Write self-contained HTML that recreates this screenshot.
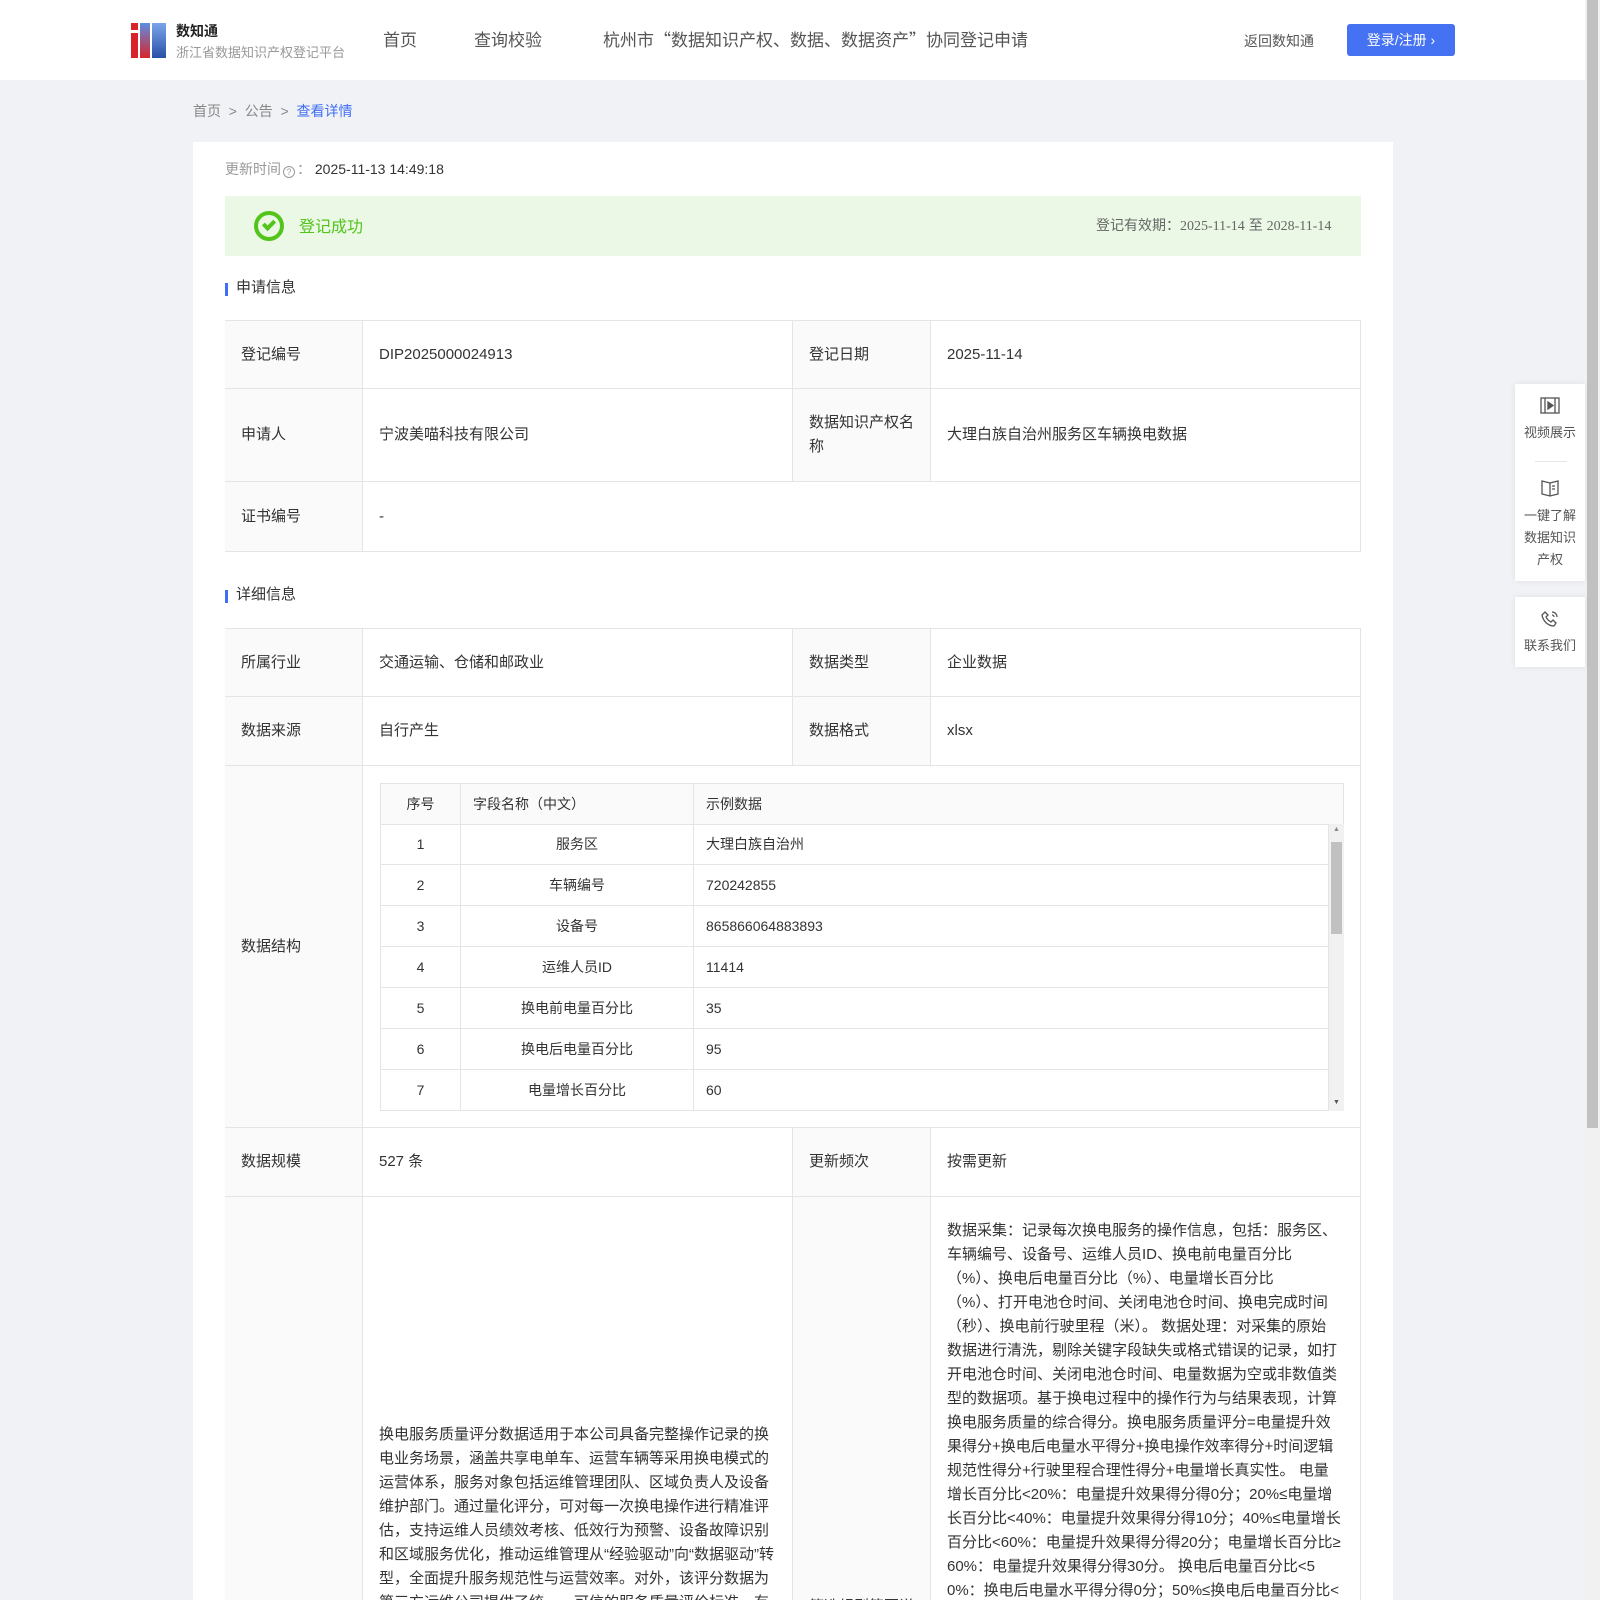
<!DOCTYPE html>
<html style="width:1600px;height:1600px;overflow:hidden"><head><meta charset="utf-8">
<style>
*{margin:0;padding:0;box-sizing:border-box}
body{width:1600px;height:1600px;overflow:hidden;background:#f0f2f5;font-family:"Liberation Sans","Noto Sans CJK SC",sans-serif;color:#333;position:relative}
.a{position:absolute}
.hdr{left:0;top:0;width:1585px;height:80px;background:#fff}
.nav{font-size:17px;color:#555;top:26px}
.card{left:193px;top:142px;width:1200px;height:1458px;background:#fff}
.cell{position:absolute;border-right:1px solid #e4e4e4;border-bottom:1px solid #e4e4e4;font-size:15px;color:#333;display:flex;align-items:center;padding:0 16px;line-height:24px}
.lb{background:#fafafa}
.tt{font-size:15px;color:#333}
.bar{width:3px;height:13px;background:#3f6ef5}
.ic{position:absolute;font-size:13px;color:#555;display:flex;align-items:center;justify-content:center;text-align:center}
.q{font-family:"Noto Sans CJK SC",sans-serif}
.nw{white-space:nowrap}
</style></head><body>
<div class="a hdr"></div>
<div class="a" style="left:131px;top:23px;width:7px;height:7px;background:#d9232b"></div>
<div class="a" style="left:131px;top:33px;width:7px;height:25px;background:#d9232b"></div>
<div class="a" style="left:140px;top:23px;width:10px;height:35px;background:linear-gradient(#5b8ee0,#d9232b)"></div>
<div class="a" style="left:152px;top:23px;width:14px;height:35px;background:linear-gradient(#7aa5ea,#2a4fa8)"></div>
<div class="a" style="left:176px;top:21px;font-size:14px;font-weight:bold;color:#222">数知通</div>
<div class="a" style="left:176px;top:42px;font-size:13px;color:#999">浙江省数据知识产权登记平台</div>
<div class="a nav" style="left:383px">首页</div>
<div class="a nav" style="left:474px">查询校验</div>
<div class="a nav" style="left:603px">杭州市<span class="q">“</span>数据知识产权、数据、数据资产<span class="q">”</span>协同登记申请</div>
<div class="a" style="left:1244px;top:31px;font-size:14px;color:#555">返回数知通</div>
<div class="a" style="left:1347px;top:24px;width:108px;height:32px;background:#4472f3;border-radius:3px;color:#fff;font-size:14px;display:flex;align-items:center;justify-content:center">登录/注册 ›</div>
<div class="a" style="left:1585px;top:0;width:15px;height:1600px;background:#f1f1f1"></div>
<div class="a" style="left:1587px;top:0;width:11px;height:1128px;background:#c1c1c1"></div>
<div class="a" style="left:193px;top:101px;font-size:14px;color:#888">首页 &nbsp;&gt;&nbsp; 公告 &nbsp;&gt;&nbsp; <span style="color:#3f6ef5">查看详情</span></div>
<div class="a card"></div>
<div class="a" style="left:225px;top:159px;font-size:14px;color:#999">更新时间<span style="display:inline-block;width:12px;height:12px;border:1px solid #999;border-radius:50%;font-size:9px;line-height:10px;text-align:center;vertical-align:-1px;margin:0 2px">?</span>： <span style="color:#333">2025-11-13 14:49:18</span></div>
<div class="a" style="left:225px;top:196px;width:1136px;height:60px;background:#ebf8e6"></div>
<div class="a" style="left:254px;top:211px;width:30px;height:30px;border:4px solid #52c41a;border-radius:50%"></div>
<div class="a" style="left:265px;top:218px;width:8px;height:12px;border-right:4px solid #52c41a;border-bottom:4px solid #52c41a;transform:rotate(45deg)"></div>
<div class="a" style="left:299px;top:213px;font-size:16px;color:#52c41a">登记成功</div>
<div class="a" style="left:1096px;top:215px;font-size:14px;color:#666">登记有效期：<span style="font-family:'Liberation Serif',serif">2025-11-14</span> 至 <span style="font-family:'Liberation Serif',serif">2028-11-14</span></div>
<div class="a bar" style="left:225px;top:283px"></div><div class="a tt" style="left:236px;top:276px">申请信息</div>
<div class="a bar" style="left:225px;top:590px"></div><div class="a tt" style="left:236px;top:583px">详细信息</div>
<div class="a" style="left:225px;top:320px;width:1136px;height:232px;border-left:1px solid #e4e4e4;border-top:1px solid #e4e4e4"></div>
<div class="cell lb" style="left:225px;top:321px;width:138px;height:68px">登记编号</div>
<div class="cell" style="left:363px;top:321px;width:430px;height:68px">DIP2025000024913</div>
<div class="cell lb" style="left:793px;top:321px;width:138px;height:68px">登记日期</div>
<div class="cell" style="left:931px;top:321px;width:430px;height:68px">2025-11-14</div>
<div class="cell lb" style="left:225px;top:389px;width:138px;height:93px">申请人</div>
<div class="cell" style="left:363px;top:389px;width:430px;height:93px">宁波美喵科技有限公司</div>
<div class="cell lb" style="left:793px;top:389px;width:138px;height:93px">数据知识产权名称</div>
<div class="cell" style="left:931px;top:389px;width:430px;height:93px">大理白族自治州服务区车辆换电数据</div>
<div class="cell lb" style="left:225px;top:482px;width:138px;height:70px">证书编号</div>
<div class="cell" style="left:363px;top:482px;width:998px;height:70px">-</div>
<div class="a" style="left:225px;top:628px;width:1136px;height:972px;border-left:1px solid #e4e4e4;border-top:1px solid #e4e4e4"></div>
<div class="cell lb" style="left:225px;top:629px;width:138px;height:68px">所属行业</div>
<div class="cell" style="left:363px;top:629px;width:430px;height:68px">交通运输、仓储和邮政业</div>
<div class="cell lb" style="left:793px;top:629px;width:138px;height:68px">数据类型</div>
<div class="cell" style="left:931px;top:629px;width:430px;height:68px">企业数据</div>
<div class="cell lb" style="left:225px;top:697px;width:138px;height:69px">数据来源</div>
<div class="cell" style="left:363px;top:697px;width:430px;height:69px">自行产生</div>
<div class="cell lb" style="left:793px;top:697px;width:138px;height:69px">数据格式</div>
<div class="cell" style="left:931px;top:697px;width:430px;height:69px">xlsx</div>
<div class="cell lb" style="left:225px;top:766px;width:138px;height:362px">数据结构</div>
<div class="cell" style="left:363px;top:766px;width:998px;height:362px"></div>
<div class="cell lb" style="left:225px;top:1128px;width:138px;height:69px">数据规模</div>
<div class="cell" style="left:363px;top:1128px;width:430px;height:69px">527 条</div>
<div class="cell lb" style="left:793px;top:1128px;width:138px;height:69px">更新频次</div>
<div class="cell" style="left:931px;top:1128px;width:430px;height:69px">按需更新</div>
<div class="cell lb" style="left:225px;top:1197px;width:138px;height:403px;border-bottom:none"></div>
<div class="cell" style="left:363px;top:1197px;width:430px;height:403px;border-bottom:none;align-items:flex-start;padding-top:226px;overflow:hidden">换电服务质量评分数据适用于本公司具备完整操作记录的换电业务场景，涵盖共享电单车、运营车辆等采用换电模式的运营体系，服务对象包括运维管理团队、区域负责人及设备维护部门。通过量化评分，可对每一次换电操作进行精准评估，支持运维人员绩效考核、低效行为预警、设备故障识别和区域服务优化，推动运维管理从“经验驱动”向“数据驱动”转型，全面提升服务规范性与运营效率。对外，该评分数据为第三方运维公司提供了统一、可信的服务质量评价标准，有</div>
<div class="cell lb" style="left:793px;top:1197px;width:138px;height:403px;border-bottom:none;align-items:flex-start;padding-top:398px;overflow:hidden">筛选规则简要说明</div>
<div class="cell" style="left:931px;top:1197px;width:430px;height:403px;border-bottom:none;align-items:flex-start;padding-top:22px;overflow:hidden"><div class="nw">数据采集：记录每次换电服务的操作信息，包括：服务区、<br>车辆编号、设备号、运维人员ID、换电前电量百分比<br>（%）、换电后电量百分比（%）、电量增长百分比<br>（%）、打开电池仓时间、关闭电池仓时间、换电完成时间<br>（秒）、换电前行驶里程（米）。 数据处理：对采集的原始<br>数据进行清洗，剔除关键字段缺失或格式错误的记录，如打<br>开电池仓时间、关闭电池仓时间、电量数据为空或非数值类<br>型的数据项。基于换电过程中的操作行为与结果表现，计算<br>换电服务质量的综合得分。换电服务质量评分=电量提升效<br>果得分+换电后电量水平得分+换电操作效率得分+时间逻辑<br>规范性得分+行驶里程合理性得分+电量增长真实性。 电量<br>增长百分比&lt;20%：电量提升效果得分得0分；20%≤电量增<br>长百分比&lt;40%：电量提升效果得分得10分；40%≤电量增长<br>百分比&lt;60%：电量提升效果得分得20分；电量增长百分比≥<br>60%：电量提升效果得分得30分。 换电后电量百分比&lt;5<br>0%：换电后电量水平得分得0分；50%≤换电后电量百分比&lt;</div></div>
<div class="a" style="left:380px;top:783px;width:964px;height:328px;border-left:1px solid #e4e4e4;border-top:1px solid #e4e4e4;overflow:hidden;font-size:14px">
<div style="display:flex;height:41px;background:#fafafa;border-bottom:1px solid #e4e4e4;align-items:center">
<div style="width:80px;text-align:center;border-right:1px solid #e4e4e4;height:40px;line-height:40px">序号</div>
<div style="width:233px;padding-left:12px;border-right:1px solid #e4e4e4;height:40px;line-height:40px">字段名称（中文）</div>
<div style="flex:1;padding-left:12px;border-right:1px solid #e4e4e4;height:40px;line-height:40px">示例数据</div></div>
</div>
<div class="a" id="rows" style="left:380px;top:824px;width:949px"></div>
<div class="a" style="left:1329px;top:824px;width:15px;height:287px;background:#f1f1f1"></div>
<div class="a" style="left:1331px;top:842px;width:11px;height:92px;background:#c1c1c1"></div>
<div class="a" style="left:1333px;top:826px;font-size:7px;color:#888">▲</div>
<div class="a" style="left:1333px;top:1099px;font-size:7px;color:#555">▼</div>
<div class="a" style="left:1515px;top:384px;width:70px;height:197px;background:#fff;box-shadow:0 0 6px rgba(0,0,0,.08)"></div>
<div class="a" style="left:1515px;top:597px;width:70px;height:70px;background:#fff;box-shadow:0 0 6px rgba(0,0,0,.08)"></div>
<svg class="a" style="left:1540px;top:397px" width="20" height="18" viewBox="0 0 20 18" fill="none" stroke="#555" stroke-width="1.3"><rect x="1" y="1" width="18" height="15"/><line x1="5" y1="1" x2="5" y2="16"/><line x1="15" y1="1" x2="15" y2="16"/><path d="M8 5l5 3.5-5 3.5z" fill="#555"/></svg>
<div class="ic" style="left:1515px;top:422px;width:70px">视频展示</div>
<div class="a" style="left:1535px;top:461px;width:32px;height:1px;background:#e6e6e6"></div>
<svg class="a" style="left:1540px;top:478px" width="20" height="20" viewBox="0 0 20 20" fill="none" stroke="#555" stroke-width="1.3"><path d="M2 3l8 2 8-2v13l-8 2-8-2z"/><path d="M10 5v13"/><path d="M12 8h3M12 11h3"/></svg>
<div class="ic" style="left:1515px;top:505px;width:70px;line-height:22px">一键了解<br>数据知识<br>产权</div>
<svg class="a" style="left:1540px;top:609px" width="20" height="20" viewBox="0 0 20 20" fill="none" stroke="#555" stroke-width="1.3"><path d="M5 3l3 3-2 2c1 2 3 4 5 5l2-2 3 3-2 3C8 17 3 12 2 6z"/><path d="M12 3a5 5 0 015 5M12 6a2 2 0 012 2"/></svg>
<div class="ic" style="left:1515px;top:635px;width:70px">联系我们</div>
<script>
var d=[["1","服务区","大理白族自治州"],["2","车辆编号","720242855"],["3","设备号","865866064883893"],["4","运维人员ID","11414"],["5","换电前电量百分比","35"],["6","换电后电量百分比","95"],["7","电量增长百分比","60"]];
var h="";d.forEach(function(r){h+='<div style="display:flex;height:41px;border-bottom:1px solid #e4e4e4;border-left:1px solid #e4e4e4;font-size:14px;line-height:40px"><div style="width:80px;text-align:center;border-right:1px solid #e4e4e4">'+r[0]+'</div><div style="width:233px;text-align:center;border-right:1px solid #e4e4e4">'+r[1]+'</div><div style="flex:1;padding-left:12px;border-right:1px solid #e4e4e4">'+r[2]+'</div></div>'});
document.getElementById("rows").innerHTML=h;
</script>
</body></html>
